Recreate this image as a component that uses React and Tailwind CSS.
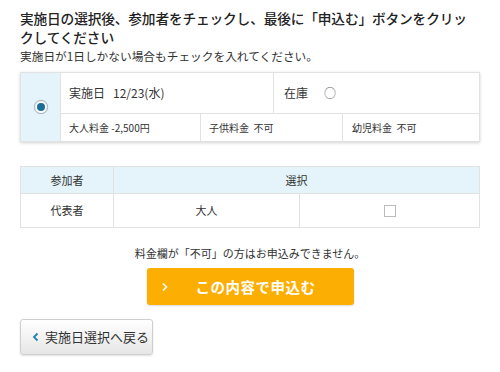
const FONT = { fontFamily: '"Noto Sans CJK JP", "Noto Sans", sans-serif' }

function Radio() {
  return (
    <span className="flex h-[14px] w-[14px] items-center justify-center rounded-full border border-[#a9b4bb] bg-white shadow-[0_0_1px_rgba(0,0,0,0.2)]">
      <span className="h-[8px] w-[8px] rounded-full bg-[#1b6e98]" />
    </span>
  )
}

export default function App() {
  return (
    <div className="min-h-[372px] w-[500px] bg-white px-[20px] pt-[9px] text-[#333]" style={FONT}>
      <h1 className="text-[13.7px] font-medium leading-[19px] tracking-[-0.15px] text-[#222]">
        実施日の選択後、参加者をチェックし、最後に「申込む」ボタンをクリックしてください
      </h1>
      <p className="text-[11.7px] leading-[18px]">実施日が1日しかない場合もチェックを入れてください。</p>

      <div className="mt-[7px] flex border border-[#e2e2e2] shadow-[0_1px_3px_rgba(0,0,0,0.18)]">
        <div className="flex w-[40px] items-center justify-center border-r border-[#e2e2e2] bg-[#e4f4fa]">
          <Radio />
        </div>
        <div className="flex flex-1 flex-col">
          <div className="flex h-[41px] items-center border-b border-[#e2e2e2] text-[12px]">
            <div className="flex h-full w-[213px] items-center border-r border-[#e2e2e2] px-[8px]">
              <span>実施日</span>
              <span className="ml-[8px]">12/23(水)</span>
            </div>
            <div className="flex h-full flex-1 items-center px-[10px]">
              <span>在庫</span>
              <span className="ml-[16px] text-[#666]">○</span>
            </div>
          </div>
          <div className="flex h-[27px] items-center text-[10px]">
            <div className="flex h-full w-[140px] items-center border-r border-[#e2e2e2] px-[8px]">大人料金 -2,500円</div>
            <div className="flex h-full w-[142px] items-center border-r border-[#e2e2e2] px-[8px]">子供料金&nbsp;&nbsp;不可</div>
            <div className="flex h-full flex-1 items-center px-[9px]">幼児料金&nbsp;&nbsp;不可</div>
          </div>
        </div>
      </div>

      <table className="mt-[24px] w-full border-collapse text-[11px]">
        <thead>
          <tr className="h-[27px] bg-[#e4f4fa]">
            <th className="w-[93px] border border-[#e2e2e2] font-normal">参加者</th>
            <th colSpan={2} className="border border-[#e2e2e2] font-normal">選択</th>
          </tr>
        </thead>
        <tbody>
          <tr className="h-[34px]">
            <td className="border border-[#e2e2e2] text-center">代表者</td>
            <td className="w-[186px] border border-[#e2e2e2] text-center">大人</td>
            <td className="border border-[#e2e2e2]">
              <span className="mx-auto block h-[12px] w-[12px] border border-[#bbb] bg-white" />
            </td>
          </tr>
        </tbody>
      </table>

      <p className="mt-[17px] text-center text-[11px] leading-[16px]">料金欄が「不可」の方はお申込みできません。</p>

      <div className="mt-[7px] flex justify-center">
        <button className="flex h-[37px] w-[207px] items-center rounded-[3px] bg-[#fdae02] pl-[14px] text-white shadow-[0_1px_2px_rgba(0,0,0,0.15)]">
          <svg width="8" height="10" viewBox="0 0 8 10" fill="none" stroke="white" strokeWidth="1.6">
            <path d="M2 1.5 L5.5 5 L2 8.5" />
          </svg>
          <span className="ml-[27px] text-[14.5px] font-semibold tracking-[0.5px]">この内容で申込む</span>
        </button>
      </div>

      <button className="mt-[14px] flex h-[36px] w-[133px] items-center rounded-[3px] border border-[#cfcfcf] bg-gradient-to-b from-white to-[#e6e6e6] pl-[11px] text-[13px] text-[#333] shadow-[0_1px_2px_rgba(0,0,0,0.12)]">
        <svg width="8" height="10" viewBox="0 0 8 10" fill="none" stroke="#2a7fb0" strokeWidth="1.8">
          <path d="M5.5 1.5 L2 5 L5.5 8.5" />
        </svg>
        <span className="ml-[5px]">実施日選択へ戻る</span>
      </button>
    </div>
  )
}
